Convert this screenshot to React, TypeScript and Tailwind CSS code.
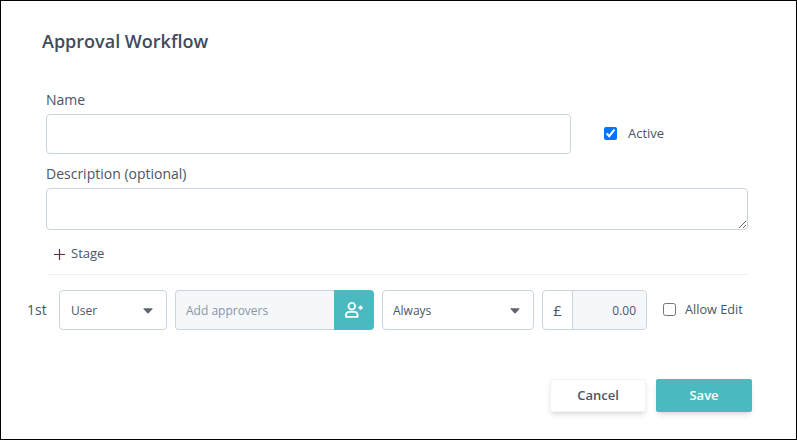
function Caret() {
  return (
    <svg width="10" height="6" viewBox="0 0 10 6" className="mt-[2px] shrink-0">
      <path d="M0.3 0.8 Q0.3 0.2 1 0.2 H9 Q9.7 0.2 9.7 0.8 L5.5 5.3 Q5 5.8 4.5 5.3 Z" fill="#5b6472" />
    </svg>
  )
}

function AddUserIcon() {
  return (
    <svg width="18" height="16" viewBox="0 0 18 16" fill="none" stroke="currentColor" strokeWidth="1.8">
      <circle cx="6.8" cy="4.2" r="3.3" />
      <path d="M1 14.8 V13 a3.2 3.2 0 0 1 3.2 -3.2 h5.2 a3.2 3.2 0 0 1 3.2 3.2 v1.8 Z" strokeLinejoin="round" />
      <path d="M13.4 5.6 h4.4 M15.6 3.4 v4.4" />
    </svg>
  )
}

function SelectBox({ label, className }: { label: string; className: string }) {
  return (
    <div className={`flex h-10 items-center justify-between rounded border border-[#cbd5e0] bg-white pr-[13px] text-xs text-[#4a5568] ${className}`}>
      <span className="pt-px">{label}</span>
      <Caret />
    </div>
  )
}

export default function App() {
  return (
    <div className="h-[440px] w-[797px] overflow-hidden border border-black bg-white font-['Open_Sans',sans-serif] text-[#4a5568]">
      <h1 className="pl-[41px] pt-[28px] text-[18px] leading-6 font-semibold text-[#414b5c]">Approval Workflow</h1>

      <div className="pl-[45px] pt-[37px]">
        <label className="block text-sm leading-[19px]">Name</label>
        <div className="mt-[5px] flex items-center">
          <input className="h-10 w-[525px] rounded border border-[#cbd5e0] bg-white" />
          <input type="checkbox" defaultChecked className="mb-px ml-[33px] size-[13px] accent-[#0075ff]" />
          <span className="ml-[11px] text-[13px]">Active</span>
        </div>
        <label className="mt-[10px] block text-sm leading-[19px]">Description (optional)</label>
        <textarea className="mt-[5px] block h-[42px] w-[702px] rounded border border-[#cbd5e0] bg-white" />
        <div className="mt-[15px] flex h-[18px] items-center pl-[8px] text-[13px]">
          <svg width="11" height="11" viewBox="0 0 11 11" stroke="#5c3149" strokeWidth="1.2">
            <path d="M0 5.5 H11 M5.5 0 V11" />
          </svg>
          <span className="ml-[6px]">Stage</span>
        </div>
        <div className="ml-[2px] mt-[11px] h-px w-[699px] bg-[#edf0f3]" />
      </div>

      <div className="flex items-center pl-[26px] pt-[15px]">
        <span className="w-[32px] text-sm">1st</span>
        <SelectBox label="User" className="w-[108px] pl-[11px]" />
        <div className="ml-[8px] flex h-10 w-[199px]">
          <div className="flex flex-1 items-center rounded-l border border-r-0 border-[#cbd5e0] bg-[#f5f8fb] pl-[10px] pt-px text-xs text-[#8a94a3]">Add approvers</div>
          <div className="flex w-10 items-center justify-center rounded-r bg-[#4abac0] text-white">
            <AddUserIcon />
          </div>
        </div>
        <SelectBox label="Always" className="ml-[8px] w-[152px] pl-[10px]" />
        <div className="ml-[8px] flex h-10 w-[105px] rounded border border-[#cbd5e0] text-xs">
          <div className="flex w-[30px] items-center justify-center border-r border-[#cbd5e0] text-[15px]">£</div>
          <div className="flex flex-1 items-center justify-end rounded-r bg-[#f5f8fb] pr-[10px] pt-px">0.00</div>
        </div>
        <input type="checkbox" className="mb-px ml-4 size-[13px]" />
        <span className="ml-[9px] text-[12.7px]">Allow Edit</span>
      </div>

      <div className="flex justify-end gap-[10px] pr-[44px] pt-[49px] text-[13px] font-semibold">
        <button className="h-[33px] w-[96px] rounded-[2px] border border-[#f2f3f8] bg-white text-[#4a5568] shadow-md">Cancel</button>
        <button className="h-[33px] w-[96px] rounded-[2px] bg-[#4abac0] text-white shadow-md">Save</button>
      </div>
    </div>
  )
}
